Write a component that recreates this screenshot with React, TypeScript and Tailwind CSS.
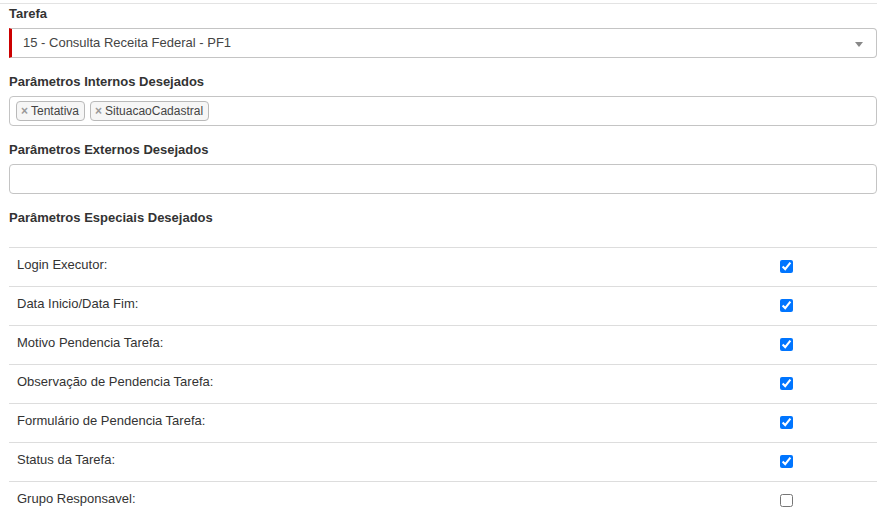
import React from "react";

const especiais = [
  { label: "Login Executor:", checked: true },
  { label: "Data Inicio/Data Fim:", checked: true },
  { label: "Motivo Pendencia Tarefa:", checked: true },
  { label: "Observação de Pendencia Tarefa:", checked: true },
  { label: "Formulário de Pendencia Tarefa:", checked: true },
  { label: "Status da Tarefa:", checked: true },
  { label: "Grupo Responsavel:", checked: false },
];

function Tag({ text }: { text: string }) {
  return (
    <span className="flex items-center h-[20px] border border-[#b9b9b9] rounded-[4px] bg-[#f6f6f6] pl-[4px] pr-[5px] text-[12px] leading-[18px] text-[#444]">
      <span className="font-bold text-[#999] mr-[3px]">×</span>
      {text}
    </span>
  );
}

export default function App() {
  return (
    <div className="w-[877px] min-h-[524px] bg-white font-['Liberation_Sans',Arial,sans-serif] text-[13px] text-[#333] pt-[3px]">
      <div className="border-t border-[#e3e3e3] pl-[9px] pt-[1px]">
        <label className="block font-bold leading-[18px] mb-[5px]">Tarefa</label>
        <div className="h-[30px] flex items-center justify-between border border-[#c4c4c4] border-l-[3px] border-l-[#cc0000] rounded-r-[4px] pl-[11px] pr-[13px] text-[#444]">
          <span className="leading-[28px]">15 - Consulta Receita Federal - PF1</span>
          <span className="w-0 h-0 border-t-[5px] border-t-[#888] border-x-[4px] border-x-transparent mt-[2px]" />
        </div>

        <label className="block font-bold leading-[18px] mt-[15px] mb-[5px]">
          Parâmetros Internos Desejados
        </label>
        <div className="h-[30px] flex items-start gap-[5px] border border-[#c4c4c4] rounded-[4px] pl-[6px] pt-[4px]">
          <Tag text="Tentativa" />
          <Tag text="SituacaoCadastral" />
        </div>

        <label className="block font-bold leading-[18px] mt-[15px] mb-[5px]">
          Parâmetros Externos Desejados
        </label>
        <div className="h-[30px] border border-[#c4c4c4] rounded-[4px]" />

        <label className="block font-bold leading-[18px] mt-[15px]">
          Parâmetros Especiais Desejados
        </label>

        <div className="mt-[20px]">
          {especiais.map((row) => (
            <div
              key={row.label}
              className="h-[39px] border-t border-[#dddddd] flex items-start"
            >
              <span className="flex-1 pl-[8px] pt-[8px] leading-[18px]">{row.label}</span>
              <span className="w-[97px] pt-[12px]">
                <input
                  type="checkbox"
                  defaultChecked={row.checked}
                  className="block w-[13px] h-[13px] accent-[#0075ff]"
                />
              </span>
            </div>
          ))}
        </div>
      </div>
    </div>
  );
}
